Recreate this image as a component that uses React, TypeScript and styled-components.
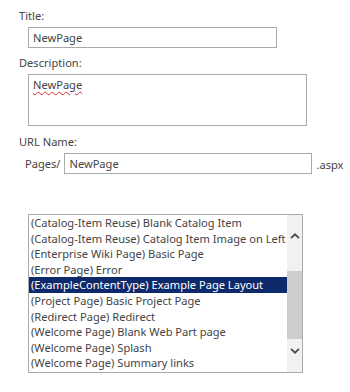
import styled, { createGlobalStyle } from "styled-components";

const GlobalStyle = createGlobalStyle`
  html, body {
    margin: 0;
    padding: 0;
    background: #ffffff;
  }
  body {
    font-family: "Noto Sans", "Open Sans", sans-serif;
    font-size: 11.1px;
    color: #444444;
  }
`;

const Page = styled.div`
  width: 350px;
  height: 392px;
  padding: 8px 0 0 19px;
  box-sizing: border-box;
  display: flex;
  flex-direction: column;
`;

const Label = styled.div`
  line-height: 16px;
  height: 16px;
`;

const Field = styled.div`
  margin: 3px 0 0 9px;
`;

const TextBox = styled.div<{ $width: number; $height?: number }>`
  width: ${({ $width }) => $width}px;
  height: ${({ $height }) => $height ?? 21}px;
  box-sizing: border-box;
  border: 1px solid #ababab;
  padding: 0 4px;
  line-height: 19px;
  color: #444444;
  background: #ffffff;
`;

const Squiggle = styled.span`
  text-decoration: underline wavy #d62c2c;
  text-decoration-thickness: 1px;
  text-underline-offset: 2px;
`;

const Section = styled.div<{ $gap: number }>`
  margin-top: ${({ $gap }) => $gap}px;
`;

const UrlRow = styled.div`
  display: flex;
  align-items: center;
  margin: 3px 0 0 6px;
  gap: 4px;
`;

const Suffix = styled.span`
  padding-top: 2px;
`;

const ListBox = styled.div`
  margin: 40px 0 0 9px;
  width: 275px;
  height: 159px;
  box-sizing: border-box;
  border: 1px solid #ababab;
  display: flex;
  background: #ffffff;
`;

const Options = styled.div`
  flex: 1;
  overflow: hidden;
`;

const Option = styled.div<{ $selected?: boolean }>`
  height: 15.6px;
  line-height: 15.6px;
  padding-left: 2px;
  white-space: nowrap;
  background: ${({ $selected }) => ($selected ? "#0f2a6b" : "transparent")};
  color: ${({ $selected }) => ($selected ? "#ffffff" : "#444444")};
`;

const ScrollBar = styled.div`
  width: 15px;
  background: #f1f0f2;
  display: flex;
  flex-direction: column;
  align-items: center;
  padding: 18px 0 18px;
  box-sizing: border-box;
`;

const Arrow = styled.svg`
  width: 10px;
  height: 6px;
  flex: none;
`;

const Track = styled.div`
  flex: 1;
  width: 100%;
  display: flex;
  flex-direction: column;
`;

const Thumb = styled.div`
  margin-top: 32px;
  height: 68px;
  background: #cdcdcd;
  width: 100%;
`;

const items = [
  "(Catalog-Item Reuse) Blank Catalog Item",
  "(Catalog-Item Reuse) Catalog Item Image on Left",
  "(Enterprise Wiki Page) Basic Page",
  "(Error Page) Error",
  "(ExampleContentType) Example Page Layout",
  "(Project Page) Basic Project Page",
  "(Redirect Page) Redirect",
  "(Welcome Page) Blank Web Part page",
  "(Welcome Page) Splash",
  "(Welcome Page) Summary links",
];

const App = () => {
  return (
    <>
      <GlobalStyle />
      <Page>
        <Label>Title:</Label>
        <Field>
          <TextBox $width={249}>NewPage</TextBox>
        </Field>
        <Section $gap={7}>
          <Label>Description:</Label>
          <Field>
            <TextBox $width={279} $height={52}>
              <Squiggle>NewPage</Squiggle>
            </TextBox>
          </Field>
        </Section>
        <Section $gap={8}>
          <Label>URL Name:</Label>
          <UrlRow>
            <span>Pages/</span>
            <TextBox $width={248}>NewPage</TextBox>
            <Suffix>.aspx</Suffix>
          </UrlRow>
        </Section>
        <ListBox>
          <Options>
            {items.map((item, i) => (
              <Option key={item} $selected={i === 4}>
                {item}
              </Option>
            ))}
          </Options>
          <ScrollBar>
            <Arrow viewBox="0 0 10 6">
              <path d="M1 5.2 L5 1.3 L9 5.2" fill="none" stroke="#4a4a4a" strokeWidth="1.8" />
            </Arrow>
            <Track>
              <Thumb />
            </Track>
            <Arrow viewBox="0 0 10 6">
              <path d="M1 0.8 L5 4.7 L9 0.8" fill="none" stroke="#4a4a4a" strokeWidth="1.8" />
            </Arrow>
          </ScrollBar>
        </ListBox>
      </Page>
    </>
  );
};

export default App;
